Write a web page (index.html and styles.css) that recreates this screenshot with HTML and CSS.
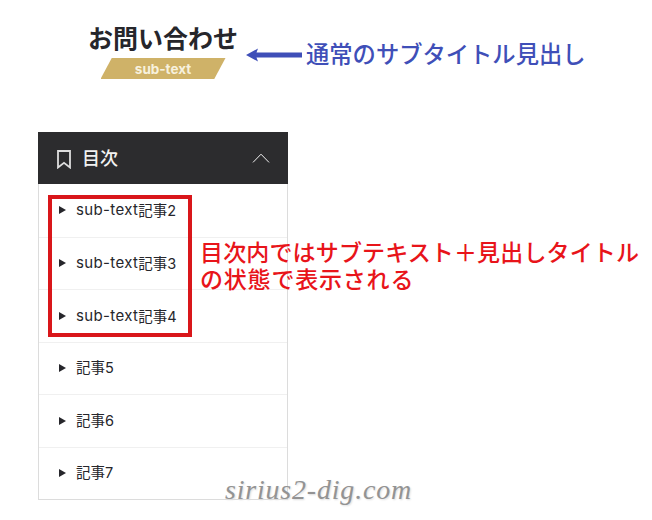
FILE: index.html
```html
<!DOCTYPE html>
<html lang="ja">
<head>
<meta charset="utf-8">
<title>目次</title>
<link rel="stylesheet" href="styles.css">
</head>
<body>
<main class="page">
  <header class="heading">
    <h1 class="heading-title">お問い合わせ</h1>
    <p class="heading-sub"><span>sub-text</span></p>
  </header>
  <nav class="toc">
    <div class="toc-head">
      <svg class="toc-mark" width="14" height="19" viewBox="0 0 14 19"><path d="M1 1h12v16.5l-6-4.6-6 4.6z" fill="none" stroke="#dedede" stroke-width="1.8"/></svg>
      <span class="toc-title">目次</span>
      <svg class="toc-chevron" width="18" height="10" viewBox="0 0 18 10"><path d="M1 9.4 9 1.2l8 8.2" fill="none" stroke="#f2f2f2" stroke-width="1"/></svg>
    </div>
    <ul class="toc-list">
      <li class="toc-item toc-item-sub"><span class="toc-latin">sub-text</span>記事2</li>
      <li class="toc-item toc-item-sub"><span class="toc-latin">sub-text</span>記事3</li>
      <li class="toc-item toc-item-sub"><span class="toc-latin">sub-text</span>記事4</li>
      <li class="toc-item">記事5</li>
      <li class="toc-item">記事6</li>
      <li class="toc-item">記事7</li>
    </ul>
  </nav>
</main>
<svg class="note-arrow" width="56" height="14" viewBox="0 0 56 14"><path d="M0 7 12 .5 10.500 4.500h45.500v5H10.500L12 13.500z" fill="#3f4fb8"/></svg>
<p class="note-blue">通常のサブタイトル見出し</p>
<div class="note-box"></div>
<p class="note-red">目次内ではサブテキスト＋見出しタイトル<br><span class="note-red-second">の状態で表示される</span></p>
<p class="watermark">sirius2-dig.com</p>
</body>
</html>
```

FILE: styles.css
```css
* { box-sizing: border-box; }
html, body { margin: 0; padding: 0; background: #fff; }
body {
  width: 652px;
  height: 520px;
  position: relative;
  overflow: hidden;
  font-family: "Noto Sans CJK JP", sans-serif;
}
.page { padding: 19px 0 0 38px; width: 300px; }
.heading { width: 250px; display: flex; flex-direction: column; align-items: center; }
.heading-title {
  margin: 0;
  font-size: 25px;
  line-height: 36px;
  font-weight: 700;
  color: #26262b;
}
.heading-sub {
  margin: 3px 0 0;
  width: 125px;
  height: 21px;
  background: #cfb268;
  clip-path: polygon(9% 0, 100% 0, 91% 100%, 0 100%);
  display: flex;
  align-items: center;
  justify-content: center;
  font-family: Inter, sans-serif;
  font-size: 13.5px;
  font-weight: 700;
  color: #f7f1de;
}
.toc { margin-top: 53px; width: 250px; height: 368px; display: flex; flex-direction: column; border: 1px solid #dcdcdc; border-top: 0; }
.toc-head {
  height: 52px;
  margin: 0 -1px;
  flex: none;
  background: #2c2c2e;
  display: flex;
  align-items: center;
  padding: 0 18px 0 19px;
  color: #f2f2f2;
}
.toc-mark { margin-top: 2px; }
.toc-title { margin-left: 11px; font-size: 18px; font-weight: 500; line-height: 1; margin-top: -2px; }
.toc-chevron { margin-left: auto; }
.toc-list { list-style: none; margin: 0; padding: 0; flex: 1; display: grid; grid-auto-rows: 1fr; }
.toc-item {
  display: flex;
  align-items: center;
  padding-left: 37px;
  position: relative;
  font-family: Inter, "Noto Sans CJK JP", sans-serif;
  font-size: 14.5px;
  color: #26262b;
  border-top: 1px solid #f0f0f0;
  padding-bottom: 3px;
}
.toc-item-sub { padding-bottom: 1px; }
.toc-item:first-child { border-top: 0; }
.toc-latin { font-size: 15px; letter-spacing: .35px; }
.toc-item::before {
  content: "";
  position: absolute;
  left: 20px;
  top: 50%;
  margin-top: -4px;
  border-left: 7px solid #26262b;
  border-top: 4px solid transparent;
  border-bottom: 4px solid transparent;
}
.note-arrow { position: absolute; left: 246px; top: 48px; }
.note-blue {
  position: absolute;
  left: 306px;
  top: 38px;
  margin: 0;
  font-size: 23.3px;
  font-weight: 500;
  line-height: 30px;
  color: #3f4fb8;
  white-space: nowrap;
}
.note-box {
  position: absolute;
  left: 48px;
  top: 195px;
  width: 144px;
  height: 142px;
  border: 4px solid #d9161a;
}
.note-red {
  position: absolute;
  left: 200px;
  top: 238px;
  margin: 0;
  font-size: 23px;
  font-weight: 500;
  line-height: 27px;
  letter-spacing: .15px;
  color: #e8141a;
  white-space: nowrap;
}
.note-red-second { letter-spacing: .8px; }
.watermark {
  position: absolute;
  left: 225px;
  top: 475px;
  margin: 0;
  font-family: "Liberation Serif", serif;
  font-style: italic;
  font-size: 28px;
  line-height: 30px;
  letter-spacing: .8px;
  color: #939393;
  text-shadow: 1px 1px 2px #dcdcdc;
  white-space: nowrap;
}
```
